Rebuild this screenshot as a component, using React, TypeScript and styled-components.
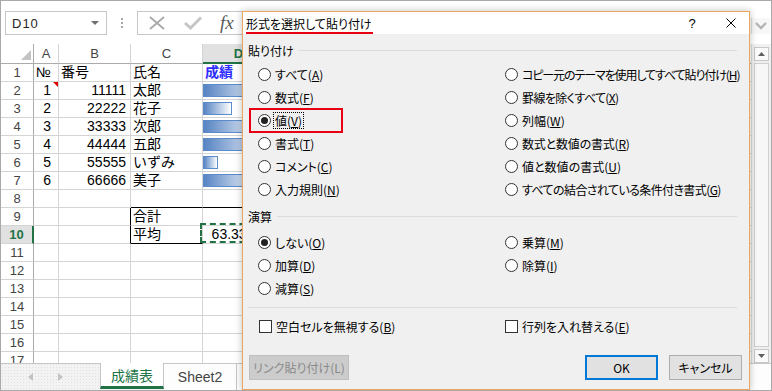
import React from "react";
import styled, { createGlobalStyle, css } from "styled-components";

const JP = `"Noto Sans CJK JP", "Noto Sans", sans-serif`;
const CELLFONT = `"Liberation Sans", "Noto Sans CJK JP", sans-serif`;
const GREEN = "#217346";
const GRID = "#d4d4d4";
const HEAD_LINE = "#ababab";

const GlobalStyle = createGlobalStyle`
  html, body { margin: 0; padding: 0; background: #ffffff; }
  *, *::before, *::after { box-sizing: border-box; }
`;

const Screen = styled.div`
  position: relative;
  width: 772px;
  height: 391px;
  border: 1px solid #a9a9a9;
  background: #ffffff;
  overflow: hidden;
  display: flex;
  flex-direction: column;
`;

/* ---------------- formula bar ---------------- */
const FormulaBar = styled.div`
  flex: none;
  height: 43px;
  display: flex;
  align-items: flex-start;
  padding: 10px 1px 0 4px;
`;

const NameBox = styled.div`
  width: 102px;
  height: 24px;
  border: 1px solid #c6c6c6;
  display: flex;
  align-items: center;
  justify-content: space-between;
  padding: 0 7px 0 6px;
  font: 13px/1 "Liberation Sans", sans-serif;
  color: #262626;
  letter-spacing: 1px;
`;

const Caret = styled.span`
  width: 0;
  height: 0;
  border-left: 4px solid transparent;
  border-right: 4px solid transparent;
  border-top: 4px solid #707070;
`;

const Grip = styled.div`
  margin: 7px 0 0 14px;
  display: flex;
  flex-direction: column;
  gap: 2px;
  span {
    width: 2px;
    height: 2px;
    background: #a6a6a6;
  }
`;

const FormulaBox = styled.div`
  margin-left: 14px;
  width: 330px;
  height: 24px;
  border: 1px solid #c6c6c6;
  display: flex;
  align-items: center;
  gap: 17px;
  padding-left: 10px;
`;

const Fx = styled.span`
  font: italic 19px/1 "Liberation Serif", serif;
  color: #5a5a5a;
  margin-top: -2px;
`;

const ExpandButton = styled.div`
  margin: 7px 0 0 auto;
  width: 19px;
  height: 16px;
  display: flex;
  align-items: center;
  justify-content: center;
  background: #f7f7f7;
  border-left: 1px solid #dcdcdc;
`;

/* ---------------- sheet ---------------- */
const Body = styled.div`
  flex: 1;
  min-height: 0;
  display: flex;
`;

const Sheet = styled.div`
  flex: 1;
  overflow: hidden;
`;

const Grid = styled.div`
  display: grid;
  grid-template-columns: 33px 25px repeat(10, 72px);
  grid-template-rows: 20px repeat(17, 18px);
`;

const Corner = styled.div`
  display: flex;
  justify-content: flex-end;
  align-items: flex-end;
  padding: 0 2px 3px 0;
  border-right: 1px solid ${HEAD_LINE};
  border-bottom: 1px solid ${HEAD_LINE};
`;

const ColHead = styled.div<{ $sel?: boolean }>`
  display: flex;
  align-items: center;
  justify-content: center;
  border-right: 1px solid ${GRID};
  border-bottom: 1px solid ${HEAD_LINE};
  font: 13px/1 "Liberation Sans", sans-serif;
  color: #444;
  ${(p) =>
    p.$sel &&
    css`
      background: #e1e1e1;
      color: ${GREEN};
      font-weight: 700;
      border-bottom: 2px solid ${GREEN};
    `}
`;

const RowHead = styled.div<{ $sel?: boolean }>`
  display: flex;
  align-items: center;
  justify-content: center;
  border-right: 1px solid ${HEAD_LINE};
  border-bottom: 1px solid ${GRID};
  font: 13px/1 "Liberation Sans", sans-serif;
  color: #444;
  ${(p) =>
    p.$sel &&
    css`
      background: #e1e1e1;
      color: ${GREEN};
      font-weight: 700;
      border-right: 2px solid ${GREEN};
    `}
`;

type CellProps = {
  $align?: "left" | "right";
  $pr?: number;
  $rb?: string;
  $bb?: string;
  $bold?: boolean;
  $color?: string;
};

const Cell = styled.div<CellProps>`
  position: relative;
  display: flex;
  align-items: center;
  justify-content: ${(p) => (p.$align === "right" ? "flex-end" : "flex-start")};
  padding: 0 ${(p) => p.$pr ?? 2}px 0 2px;
  border-right: 1px solid ${(p) => p.$rb ?? GRID};
  border-bottom: 1px solid ${(p) => p.$bb ?? GRID};
  font: ${(p) => (p.$bold ? 700 : 400)} 14px/17px ${CELLFONT};
  color: ${(p) => p.$color ?? "#000"};
  white-space: nowrap;
`;

const CommentMark = styled.span`
  position: absolute;
  top: 0;
  right: 0;
  width: 0;
  height: 0;
  border-top: 5px solid #e00000;
  border-left: 5px solid transparent;
`;

const DataBar = styled.span`
  height: 13px;
  margin-left: -2px;
  border: 1px solid #5b8bc9;
  background: linear-gradient(to right, #5784c3 0%, #ffffff 100%);
`;

const MarchingAnts = styled.span`
  position: absolute;
  top: -3px;
  left: -3px;
  right: -1px;
  bottom: 0;
  border: 2px dashed ${GREEN};
  pointer-events: none;
`;

const VScroll = styled.div`
  width: 20px;
  flex: none;
  border-left: 1px solid #dadada;
  background: #f0f0f0;
  display: flex;
  flex-direction: column;
  align-items: center;
  padding: 3px 0 0 0;
  gap: 2px;
`;

const ScrollArrow = styled.div`
  width: 15px;
  height: 14px;
  flex: none;
  border: 1px solid #c8c8c8;
  background: #fafafa;
  display: flex;
  align-items: center;
  justify-content: center;
`;

const ScrollThumb = styled.div`
  width: 15px;
  flex: 1;
  border: 1px solid #cfcfcf;
  background: #f7f7f7;
`;

/* ---------------- tabs ---------------- */
const TabBar = styled.div`
  flex: none;
  height: 27px;
  display: flex;
  background-color: #f3f3f3;
  background-image: radial-gradient(#e0e0e0 0.7px, transparent 0.9px);
  background-size: 3px 3px;
`;

const TabNav = styled.div`
  width: 99px;
  border-top: 1px solid #c6c6c6;
  display: flex;
  align-items: center;
  padding: 0 0 1px 27px;
  gap: 25px;
`;

const Tab = styled.div<{ $active?: boolean; $w: number }>`
  width: ${(p) => p.$w}px;
  display: flex;
  align-items: center;
  justify-content: center;
  font: 14px/1 ${CELLFONT};
  background: #fdfdfd;
  border-top: 1px solid #c6c6c6;
  border-right: 1px solid #c6c6c6;
  color: #444;
  ${(p) =>
    p.$active &&
    css`
      background: #ffffff;
      border-top: none;
      border-left: 1px solid #c6c6c6;
      color: ${GREEN};
      border-bottom: 3px solid ${GREEN};
      margin-bottom: 1px;
      padding-top: 2px;
    `}
`;

const TabRest = styled.div`
  flex: 1;
  border-top: 1px solid #c6c6c6;
  background: #fdfdfd;
`;

/* ---------------- dialog ---------------- */
const Dialog = styled.div`
  position: absolute;
  left: 241px;
  top: 10px;
  width: 508px;
  height: 379px;
  border: 1px solid #eaa660;
  box-shadow: 0 0 7px rgba(0, 0, 0, 0.25);
  display: flex;
  flex-direction: column;
  font: 12px/15px ${JP};
  font-feature-settings: "palt" 1;
  color: #000;
  background: #f0f0f0;
`;

const TitleBar = styled.div`
  flex: none;
  height: 22px;
  background: #ffffff;
  display: flex;
  align-items: flex-end;
  padding-left: 3px;
`;

const Title = styled.span`
  line-height: 17px;
  border-bottom: 2px solid #e60012;
  padding-right: 1px;
`;

const Help = styled.span`
  align-self: center;
  margin-left: auto;
  width: 10px;
  text-align: center;
  font: 13px/1 "Liberation Sans", sans-serif;
`;

const CloseIcon = styled.svg`
  align-self: center;
  margin: 0 13px 0 29px;
`;

const DialogBody = styled.div`
  flex: 1;
  display: flex;
  flex-direction: column;
  padding: 8px 12px 0 5px;
`;

const GroupHeader = styled.div<{ $gap?: number }>`
  display: flex;
  align-items: center;
  gap: 5px;
  height: 16px;
  margin-top: ${(p) => p.$gap ?? 0}px;
  &::after {
    content: "";
    flex: 1;
    height: 1px;
    background: #dcdcdc;
  }
`;

const OptionGrid = styled.div<{ $rows: number; $gap: number; $indent: number }>`
  display: grid;
  grid-template-columns: ${(p) => 257 - p.$indent}px 1fr;
  grid-template-rows: repeat(${(p) => p.$rows}, 23px);
  grid-auto-flow: column;
  margin-top: ${(p) => p.$gap}px;
  padding-left: ${(p) => p.$indent}px;
`;

const Option = styled.div`
  display: flex;
  align-items: center;
  gap: 4px;
  white-space: nowrap;
`;

const Radio = styled.span<{ $on?: boolean }>`
  flex: none;
  width: 13px;
  height: 13px;
  border-radius: 50%;
  border: 1px solid #333;
  background: #fff;
  display: flex;
  align-items: center;
  justify-content: center;
  &::after {
    content: "";
    width: 7px;
    height: 7px;
    border-radius: 50%;
    background: #222;
    display: ${(p) => (p.$on ? "block" : "none")};
  }
`;

const Check = styled.span`
  flex: none;
  width: 13px;
  height: 13px;
  border: 1px solid #333;
  background: #fff;
`;

const Label = styled.span<{ $focus?: boolean; $ls?: number }>`
  letter-spacing: ${(p) => p.$ls ?? 0}px;
  ${(p) =>
    p.$focus &&
    css`
      border: 1px dotted #000;
      padding: 0 1px;
      margin-left: -2px;
    `}
  u {
    text-underline-offset: 1px;
  }
`;

const Separator = styled.div`
  height: 1px;
  margin-top: 7px;
  background: #dcdcdc;
`;

const ButtonRow = styled.div`
  display: flex;
  align-items: center;
  margin: 17px -5px 0 1px;
  gap: 11px;
`;

const Spacer = styled.div`
  flex: 1;
`;

const Button = styled.button<{ $kind?: "primary" | "disabled"; $w: number }>`
  width: ${(p) => p.$w}px;
  height: 25px;
  padding: 0;
  font: 12px/15px ${JP};
  font-feature-settings: "palt" 1;
  color: #000;
  background: #e1e1e1;
  border: 1px solid #adadad;
  ${(p) =>
    p.$kind === "primary" &&
    css`
      border: 2px solid #0078d7;
    `}
  ${(p) =>
    p.$kind === "disabled" &&
    css`
      background: #cccccc;
      border-color: #bfbfbf;
      color: #8a8a8a;
    `}
`;

const Highlight = styled.div`
  position: absolute;
  left: 6px;
  top: 96px;
  width: 94px;
  height: 25px;
  border: 2px solid #e60012;
  pointer-events: none;
`;

/* ---------------- data ---------------- */
const COLS = ["A", "B", "C", "D", "E", "F", "G", "H", "I", "J", "K"];
const ROWS = [
  { a: "№", b: "番号", c: "氏名", d: "成績" },
  { a: "1", b: "11111", c: "太郎", bar: 66, comment: true },
  { a: "2", b: "22222", c: "花子", bar: 29 },
  { a: "3", b: "33333", c: "次郎", bar: 62 },
  { a: "4", b: "44444", c: "五郎", bar: 68 },
  { a: "5", b: "55555", c: "いずみ", bar: 15 },
  { a: "6", b: "66666", c: "美子", bar: 58 },
  {},
  { c: "合計" },
  { c: "平均", avg: "63.33333" },
  {}, {}, {}, {}, {}, {}, {},
] as Array<{ a?: string; b?: string; c?: string; d?: string; bar?: number; comment?: boolean; avg?: string }>;

type Opt = { t: string; k: string; on?: boolean; focus?: boolean; ls?: number };

const PASTE: Opt[] = [
  { t: "すべて", k: "A" },
  { t: "数式", k: "F" },
  { t: "値", k: "V", on: true, focus: true },
  { t: "書式", k: "T" },
  { t: "コメント", k: "C" },
  { t: "入力規則", k: "N" },
  { t: "コピー元のテーマを使用してすべて貼り付け", k: "H", ls: -1.1 },
  { t: "罫線を除くすべて", k: "X", ls: -0.6 },
  { t: "列幅", k: "W" },
  { t: "数式と数値の書式", k: "R", ls: -0.2 },
  { t: "値と数値の書式", k: "U" },
  { t: "すべての結合されている条件付き書式", k: "G", ls: -0.6 },
];

const OPS: Opt[] = [
  { t: "しない", k: "O", on: true },
  { t: "加算", k: "D" },
  { t: "減算", k: "S" },
  { t: "乗算", k: "M" },
  { t: "除算", k: "I" },
];

function cellBorders(r: number, col: number): { $rb?: string; $bb?: string } {
  // box around C9:C10 with top line across C9:D9
  const out: { $rb?: string; $bb?: string } = {};
  if ((r === 9 || r === 10) && col === 1) out.$rb = "#000";
  if (r === 8 && (col === 2 || col === 3)) out.$bb = "#000";
  if (r === 10 && col === 2) out.$bb = "#000";
  return out;
}

function Mn({ t, k }: { t: string; k: string }) {
  return (
    <>
      {t}(<u>{k}</u>)
    </>
  );
}

export default function App() {
  return (
    <>
      <GlobalStyle />
      <Screen>
        <FormulaBar>
          <NameBox>
            <span>D10</span>
            <Caret />
          </NameBox>
          <Grip>
            <span />
            <span />
            <span />
          </Grip>
          <FormulaBox>
            <svg width="18" height="14" viewBox="0 0 18 14">
              <path d="M2 1 L16 13 M16 1 L2 13" stroke="#a8a8a8" strokeWidth="1.8" fill="none" />
            </svg>
            <svg width="20" height="14" viewBox="0 0 20 14">
              <path d="M2 7 L7.5 12 L18 1.5" stroke="#c6c6c6" strokeWidth="3" fill="none" />
            </svg>
            <Fx>fx</Fx>
          </FormulaBox>
          <ExpandButton>
            <svg width="12" height="8" viewBox="0 0 12 8">
              <path d="M1 1 L6 6 L11 1" stroke="#b4b4b4" strokeWidth="2.4" fill="none" />
            </svg>
          </ExpandButton>
        </FormulaBar>

        <Body>
          <Sheet>
            <Grid>
              <Corner>
                <svg width="10" height="10" viewBox="0 0 10 10">
                  <polygon points="10,0 10,10 0,10" fill="#c4c4c4" />
                </svg>
              </Corner>
              {COLS.map((c) => (
                <ColHead key={c} $sel={c === "D"}>
                  {c}
                </ColHead>
              ))}
              {ROWS.map((row, i) => {
                const r = i + 1;
                return (
                  <React.Fragment key={r}>
                    <RowHead $sel={r === 10}>{r}</RowHead>
                    {COLS.map((c, ci) => {
                      const b = cellBorders(r, ci);
                      if (ci === 0) {
                        const isNum = r >= 2;
                        return (
                          <Cell key={c} {...b} $align={isNum ? "right" : "left"} $pr={7}>
                            {row.a}
                            {row.comment && <CommentMark />}
                          </Cell>
                        );
                      }
                      if (ci === 1) {
                        const isNum = r >= 2;
                        return (
                          <Cell key={c} {...b} $align={isNum ? "right" : "left"} $pr={4}>
                            {row.b}
                          </Cell>
                        );
                      }
                      if (ci === 2) {
                        return (
                          <Cell key={c} {...b}>
                            {row.c}
                          </Cell>
                        );
                      }
                      if (ci === 3) {
                        if (row.d)
                          return (
                            <Cell key={c} {...b} $bold $color="#2e2eff">
                              {row.d}
                            </Cell>
                          );
                        if (row.bar)
                          return (
                            <Cell key={c} {...b}>
                              <DataBar style={{ width: row.bar }} />
                            </Cell>
                          );
                        if (row.avg)
                          return (
                            <Cell key={c} {...b} $align="right" $pr={4}>
                              {row.avg}
                              <MarchingAnts />
                            </Cell>
                          );
                      }
                      return <Cell key={c} {...b} />;
                    })}
                  </React.Fragment>
                );
              })}
            </Grid>
          </Sheet>
          <VScroll>
            <ScrollArrow>
              <svg width="7" height="4" viewBox="0 0 7 4">
                <polygon points="0,4 7,4 3.5,0" fill="#606060" />
              </svg>
            </ScrollArrow>
            <ScrollThumb />
            <ScrollArrow>
              <svg width="7" height="4" viewBox="0 0 7 4">
                <polygon points="0,0 7,0 3.5,4" fill="#606060" />
              </svg>
            </ScrollArrow>
          </VScroll>
        </Body>

        <TabBar>
          <TabNav>
            <svg width="5" height="8" viewBox="0 0 5 8">
              <polygon points="5,0 5,8 0,4" fill="#c2c2c2" />
            </svg>
            <svg width="5" height="8" viewBox="0 0 5 8">
              <polygon points="0,0 0,8 5,4" fill="#c2c2c2" />
            </svg>
          </TabNav>
          <Tab $active $w={64}>
            成績表
          </Tab>
          <Tab $w={73}>Sheet2</Tab>
          <TabRest />
        </TabBar>

        <Dialog>
          <TitleBar>
            <Title>形式を選択して貼り付け</Title>
            <Help>?</Help>
            <CloseIcon width="10" height="10" viewBox="0 0 10 10">
              <path d="M0.5 0.5 L9.5 9.5 M9.5 0.5 L0.5 9.5" stroke="#000" strokeWidth="1" fill="none" />
            </CloseIcon>
          </TitleBar>
          <DialogBody>
            <GroupHeader>貼り付け</GroupHeader>
            <OptionGrid $rows={6} $gap={5} $indent={10}>
              {PASTE.map((o) => (
                <Option key={o.k}>
                  <Radio $on={o.on} />
                  <Label $focus={o.focus} $ls={o.ls}>
                    <Mn t={o.t} k={o.k} />
                  </Label>
                </Option>
              ))}
            </OptionGrid>
            <GroupHeader $gap={7}>演算</GroupHeader>
            <OptionGrid $rows={3} $gap={7} $indent={10}>
              {OPS.map((o) => (
                <Option key={o.k}>
                  <Radio $on={o.on} />
                  <Label>
                    <Mn t={o.t} k={o.k} />
                  </Label>
                </Option>
              ))}
            </OptionGrid>
            <Separator />
            <OptionGrid $rows={1} $gap={7} $indent={11}>
              <Option>
                <Check />
                <Label>
                  <Mn t="空白セルを無視する" k="B" />
                </Label>
              </Option>
              <Option>
                <Check />
                <Label>
                  <Mn t="行列を入れ替える" k="E" />
                </Label>
              </Option>
            </OptionGrid>
            <ButtonRow>
              <Button $kind="disabled" $w={100}>
                リンク貼り付け(L)
              </Button>
              <Spacer />
              <Button $kind="primary" $w={73}>
                OK
              </Button>
              <Button $w={73}>キャンセル</Button>
            </ButtonRow>
          </DialogBody>
          <Highlight />
        </Dialog>
      </Screen>
    </>
  );
}
